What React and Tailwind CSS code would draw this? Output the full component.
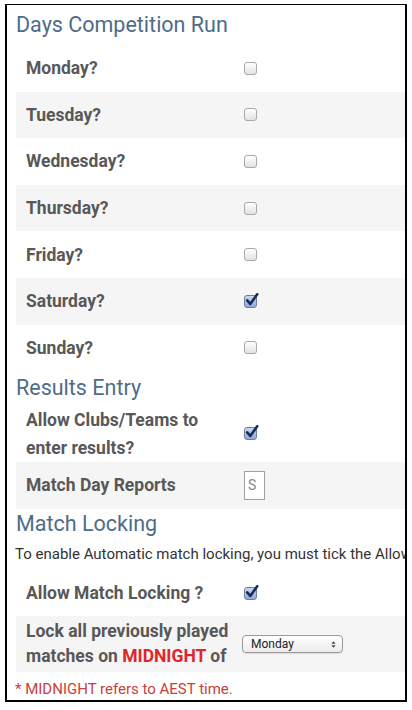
import React from "react";

function Box({ checked }) {
  if (checked) {
    return (
      <div className="relative w-[13px] h-[13px] rounded-[3px] border border-[#6a7fa8] bg-gradient-to-b from-[#c9d8f0] to-[#8fa9d6]">
        <svg viewBox="0 0 16 16" className="absolute left-[0px] top-[-3px] w-[14px] h-[14px]">
          <path d="M2.5 8.5 L6 12.5 L14 1.5" fill="none" stroke="#1b2a52" strokeWidth="3" strokeLinecap="round" strokeLinejoin="round" />
        </svg>
      </div>
    );
  }
  return (
    <div className="w-[13px] h-[13px] rounded-[3px] border border-[#a8a8a8] bg-gradient-to-b from-[#ffffff] to-[#e2e2e2]" />
  );
}

function Row({ label, gray, checked, children }) {
  return (
    <div className={`flex items-center h-[46.6px] ${gray ? "bg-[#f5f5f5]" : ""}`}>
      <div className="w-[228px] pl-[10px] shrink-0 text-[17.5px] font-bold text-[#585858] leading-[28px] whitespace-nowrap">
        {label}
      </div>
      {children ?? <Box checked={checked} />}
    </div>
  );
}

function Heading({ children, cls }) {
  return (
    <div className={`text-[21.5px] text-[#4e6c89] leading-[28px] ${cls}`}>{children}</div>
  );
}

export default function App() {
  return (
    <div className="w-[412px] h-[710px] bg-white pt-[4px] pl-[5px]" style={{ fontFamily: "Roboto, sans-serif" }}>
      <div className="w-[402px] h-[698px] border-l-2 border-r-2 border-t border-b-2 border-black overflow-hidden">
        <div className="pl-[9px]">
          <Heading cls="pt-[6px] pb-[6px]">Days Competition Run</Heading>
          <Row label="Monday?" />
          <Row label="Tuesday?" gray />
          <Row label="Wednesday?" />
          <Row label="Thursday?" gray />
          <Row label="Friday?" />
          <Row label="Saturday?" gray checked />
          <Row label="Sunday?" />
          <Heading cls="pt-[3px] pb-[3px]">Results Entry</Heading>
          <div className="flex items-center h-[57px]">
            <div className="w-[228px] pl-[10px] shrink-0 text-[17.5px] font-bold text-[#585858] leading-[28px] whitespace-nowrap">
              Allow Clubs/Teams to<br />enter results?
            </div>
            <Box checked />
          </div>
          <Row label="Match Day Reports" gray>
            <div className="w-[21px] h-[29px] border border-[#a0a0a0] bg-white text-[14px] text-[#888] flex items-center pl-[3px] overflow-hidden">
              S
            </div>
          </Row>
          <Heading cls="pt-[1px] pb-[2px]">Match Locking</Heading>
          <div className="whitespace-nowrap text-[15px] text-[#333] leading-[28px] -ml-[1px]">
            To enable Automatic match locking, you must tick the Allow
          </div>
          <div className="h-[2px]" />
          <Row label="Allow Match Locking ?" checked />
          <div className="flex items-center h-[56px] bg-[#f5f5f5]">
            <div className="w-[226px] pl-[10px] shrink-0 text-[17.5px] font-bold text-[#585858] leading-[25px] whitespace-nowrap">
              Lock all previously played<br />matches on <span className="text-[#e0262c]">MIDNIGHT</span> of
            </div>
            <div className="w-[101px] h-[18px] rounded-[4px] border border-[#9a9a9a] bg-gradient-to-b from-[#ffffff] to-[#ececec] flex items-center justify-between pl-[8px] pr-[6px] text-[12px] text-[#222] shadow-[0_1px_1px_rgba(0,0,0,0.1)]">
              <span>Monday</span>
              <svg viewBox="0 0 6 10" className="w-[5px] h-[9px]">
                <path d="M0.5 4 L3 1 L5.5 4 Z M0.5 6 L3 9 L5.5 6 Z" fill="#444" />
              </svg>
            </div>
          </div>
          <div className="text-[15px] text-[#c9403a] leading-[26px] pt-[4px] -ml-[1px]">
            * MIDNIGHT refers to AEST time.
          </div>
        </div>
      </div>
    </div>
  );
}
